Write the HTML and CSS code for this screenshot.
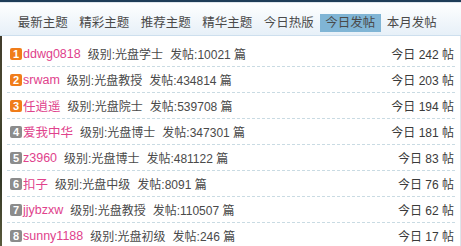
FILE: index.html
```html
<!DOCTYPE html>
<html lang="zh-CN">
<head>
  <meta charset="UTF-8">
  <title>今日发帖排行</title>
  <link rel="stylesheet" href="styles.css">
</head>
<body>
  <div class="board">
    <div class="tabs">
      <span class="tab">最新主题</span>
      <span class="tab">精彩主题</span>
      <span class="tab">推荐主题</span>
      <span class="tab">精华主题</span>
      <span class="tab">今日热版</span>
      <span class="tab active">今日发帖</span>
      <span class="tab">本月发帖</span>
    </div>

    <ul class="rank">
      <li><span class="num hot">1</span><a class="user">ddwg0818</a><span class="info">级别:光盘学士</span><span class="info">发帖:10021 篇</span><span class="today">今日 242 帖</span></li>
      <li><span class="num hot">2</span><a class="user">srwam</a><span class="info">级别:光盘教授</span><span class="info">发帖:434814 篇</span><span class="today">今日 203 帖</span></li>
      <li><span class="num hot">3</span><a class="user">任逍遥</a><span class="info">级别:光盘院士</span><span class="info">发帖:539708 篇</span><span class="today">今日 194 帖</span></li>
      <li><span class="num">4</span><a class="user">爱我中华</a><span class="info">级别:光盘博士</span><span class="info">发帖:347301 篇</span><span class="today">今日 181 帖</span></li>
      <li><span class="num">5</span><a class="user">z3960</a><span class="info">级别:光盘博士</span><span class="info">发帖:481122 篇</span><span class="today">今日 83 帖</span></li>
      <li><span class="num">6</span><a class="user">扣子</a><span class="info">级别:光盘中级</span><span class="info">发帖:8091 篇</span><span class="today">今日 76 帖</span></li>
      <li><span class="num">7</span><a class="user">jjybzxw</a><span class="info">级别:光盘教授</span><span class="info">发帖:110507 篇</span><span class="today">今日 62 帖</span></li>
      <li><span class="num">8</span><a class="user">sunny1188</a><span class="info">级别:光盘初级</span><span class="info">发帖:246 篇</span><span class="today">今日 17 帖</span></li>
    </ul>
  </div>
</body>
</html>
```

FILE: styles.css
```css
body {
  margin: 0;
  font-family: "Liberation Sans", "Noto Sans CJK SC", sans-serif;
  font-size: 12px;
  color: #333;
  background: linear-gradient(#3a3326, #4b4a32 40%, #2e3322 70%, #5a5a3c);
  height: 246px;
  overflow: hidden;
}
.board {
  width: 461px;
}
.tabs {
  height: 32px;
  border-top: 2px solid #1f3d58;
  border-bottom: 1px solid #cddfee;
  background: linear-gradient(#ffffff, #f5f9fc 40%, #e7f0f8);
  box-shadow: inset 0 1px 0 #dfe6ec;
  padding-left: 12px;
  display: flex;
  align-items: flex-end;
  padding-bottom: 1px;
}
.tab {
  width: 61.5px;
  height: 18px;
  line-height: 18px;
  margin-bottom: 2px;
  text-align: center;
  font-size: 12.5px;
  color: #4a4a4a;
}
.tab.active {
  background: #80b5d5;
}
.rank {
  list-style: none;
  margin: 0 0 0 2px;
  padding: 5px 0 0;
  background: #fff;
  border-right: 1px solid #dde4ea;
  height: 205px;
  overflow: hidden;
}
.rank li {
  display: flex;
  align-items: center;
  height: 25px;
  margin: 0 5px;
  padding: 0 1px 0 3px;
  border-bottom: 1px dashed #c9dbe3;
  white-space: nowrap;
}
.num {
  width: 12px;
  height: 12px;
  border-radius: 2px;
  background: #8c8c8c;
  color: #fff;
  font-size: 11px;
  font-weight: bold;
  line-height: 12px;
  text-align: center;
  margin-right: 1px;
}
.num.hot {
  background: #f07d1a;
}
.user {
  color: #e0428c;
  font-size: 12.5px;
}
.info {
  margin-left: 7px;
  color: #4a4a4a;
}
.today {
  margin-left: auto;
  color: #3a3a3a;
}
```
